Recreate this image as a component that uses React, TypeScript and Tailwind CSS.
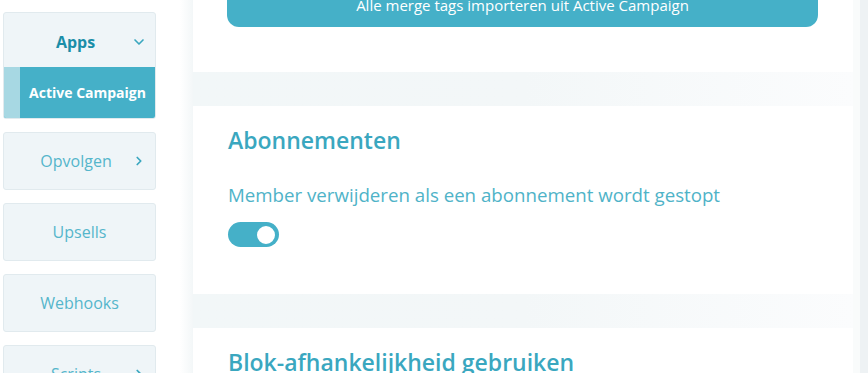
import { ChevronDown, ChevronRight } from 'lucide-react'

const font = { fontFamily: '"Open Sans", "Noto Sans", sans-serif' }

function NavButton({ label, chevron }: { label: string; chevron?: boolean }) {
  return (
    <div
      className={`flex h-[58px] w-[153px] shrink-0 items-center rounded-[3px] border border-[#e1eaee] bg-[#eff5f8] ${
        chevron ? 'pl-[16px] pr-[9px]' : 'px-[8px]'
      }`}
    >
      <span className="flex-1 text-center text-[16px] text-[#55b6cb]">{label}</span>
      {chevron && <ChevronRight size={14} strokeWidth={3} className="text-[#3aa7bf]" />}
    </div>
  )
}

function Toggle() {
  return (
    <div className="flex h-[25px] w-[51px] items-center justify-end rounded-full bg-[#45b0c8] pr-[2px]">
      <div className="h-[22px] w-[22px] rounded-full border-2 border-[#45b0c8] bg-white" />
    </div>
  )
}

function Band() {
  return <div className="h-[34px] shrink-0 bg-gradient-to-r from-[#f2f7f8] via-[#f3f7f8] to-[#fbfcfd]" />
}

export default function App() {
  return (
    <div className="flex h-[373px] w-[868px] overflow-hidden bg-white" style={font}>
      <aside className="flex w-[180px] shrink-0 flex-col gap-[13px] pl-[3px] pt-[12px]">
        <div className="w-[153px] shrink-0 overflow-hidden rounded-[3px] border border-[#e1eaee] bg-[#eff5f8]">
          <div className="flex h-[54px] items-center pl-[16px] pr-[8px] pt-[3px]">
            <span className="flex-1 text-center text-[16px] font-bold text-[#1b8ea8]">Apps</span>
            <ChevronDown size={16} strokeWidth={2.5} className="text-[#3aa7bf]" />
          </div>
          <div className="flex h-[51px] bg-[#45b0c8]">
            <div className="w-[16px] bg-[#a7d8e3]" />
            <div className="flex flex-1 items-center justify-center text-[14px] font-bold text-white">
              Active Campaign
            </div>
          </div>
        </div>
        <NavButton label="Opvolgen" chevron />
        <NavButton label="Upsells" />
        <NavButton label="Webhooks" />
        <NavButton label="Scripts" chevron />
      </aside>

      <div className="w-[13px] shrink-0 bg-gradient-to-r from-white to-[#f3f7f8]" />

      <main className="flex w-[660px] shrink-0 flex-col">
        <section className="h-[72px] shrink-0 bg-white px-[34px]">
          <button className="mt-[-16px] flex h-[43px] w-[591px] items-center justify-center rounded-b-[12px] bg-[#45b0c8] text-[15px] font-medium text-white">
            Alle merge tags importeren uit Active Campaign
          </button>
        </section>
        <Band />
        <section className="h-[188px] shrink-0 bg-white px-[35px] pt-[18px]">
          <h2 className="text-[23px] font-semibold leading-[32px] text-[#3aa7bf]">Abonnementen</h2>
          <p className="mt-[25px] text-[18.7px] leading-[28px] text-[#4fb3c8]">
            Member verwijderen als een abonnement wordt gestopt
          </p>
          <div className="mt-[13px]">
            <Toggle />
          </div>
        </section>
        <Band />
        <section className="flex-1 bg-white px-[35px] pt-[18px]">
          <h2 className="text-[23px] font-semibold leading-[32px] text-[#3aa7bf]">Blok-afhankelijkheid gebruiken</h2>
        </section>
      </main>

      <div className="w-[7px] shrink-0 bg-[#f9fbfb]" />
      <div className="flex-1 bg-[#eef2f4]" />
    </div>
  )
}
